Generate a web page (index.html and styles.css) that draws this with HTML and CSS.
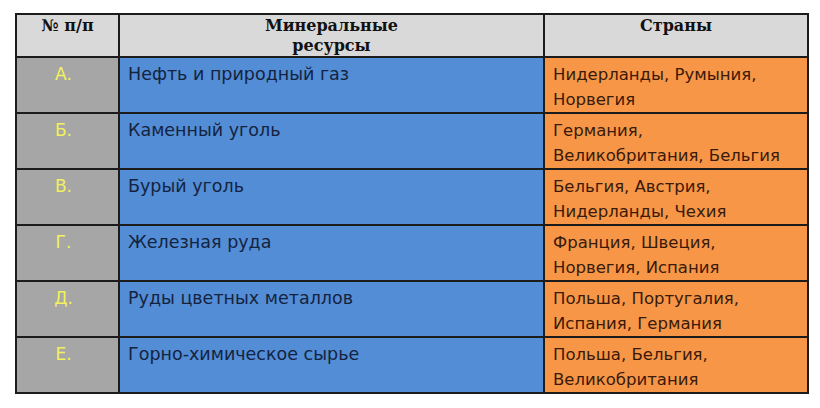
FILE: index.html
```html
<!DOCTYPE html>
<html lang="ru">
<head>
<meta charset="utf-8">
<link rel="stylesheet" href="styles.css">
</head>
<body>
<table class="res">
  <colgroup>
    <col class="c1"><col class="c2"><col class="c3">
  </colgroup>
  <thead>
    <tr class="head">
      <th>№ п/п</th>
      <th>Минеральные<br>ресурсы</th>
      <th>Страны</th>
    </tr>
  </thead>
  <tbody>
    <tr>
      <td class="num">А.</td>
      <td class="min">Нефть и природный газ</td>
      <td class="cty">Нидерланды, Румыния,<br>Норвегия</td>
    </tr>
    <tr>
      <td class="num">Б.</td>
      <td class="min">Каменный уголь</td>
      <td class="cty">Германия,<br>Великобритания, Бельгия</td>
    </tr>
    <tr>
      <td class="num">В.</td>
      <td class="min">Бурый уголь</td>
      <td class="cty">Бельгия, Австрия,<br>Нидерланды, Чехия</td>
    </tr>
    <tr>
      <td class="num">Г.</td>
      <td class="min">Железная руда</td>
      <td class="cty">Франция, Швеция,<br>Норвегия, Испания</td>
    </tr>
    <tr>
      <td class="num">Д.</td>
      <td class="min">Руды цветных металлов</td>
      <td class="cty">Польша, Португалия,<br>Испания, Германия</td>
    </tr>
    <tr>
      <td class="num">Е.</td>
      <td class="min">Горно-химическое сырье</td>
      <td class="cty">Польша, Бельгия,<br>Великобритания</td>
    </tr>
  </tbody>
</table>
</body>
</html>
```
FILE: styles.css
```css
html, body {
  margin: 0;
  padding: 0;
  background: #ffffff;
}
body {
  padding: 13px 0 0 15px;
}
.res {
  border-collapse: collapse;
  width: 792px;
  table-layout: fixed;
  font-family: "DejaVu Sans", sans-serif;
}
.c1 { width: 103px; }
.c2 { width: 425px; }
.c3 { width: 264px; }
.res th, .res td {
  border: 2px solid #1c1c1c;
  vertical-align: top;
  padding: 0;
}
.head {
  height: 43px;
}
.head th {
  background: #d9d9d9;
  font-family: "DejaVu Serif", serif;
  font-weight: bold;
  font-size: 16px;
  line-height: 20px;
  color: #111111;
  text-align: center;
  padding-top: 1px;
}
tbody tr {
  height: 56px;
}
.num {
  background: #a6a6a6;
  color: #f2f25a;
  text-align: center;
  font-size: 17px;
  line-height: 25px;
  padding-top: 4px !important;
  padding-right: 8px !important;
}
.min {
  background: #528dd6;
  color: #15233f;
  font-size: 17.5px;
  line-height: 25px;
  padding: 4px 8px 0 8px !important;
}
.cty {
  background: #f79646;
  color: #3a1a0a;
  font-size: 16.5px;
  line-height: 25px;
  padding: 4px 6px 0 8px !important;
  white-space: nowrap;
}
```
